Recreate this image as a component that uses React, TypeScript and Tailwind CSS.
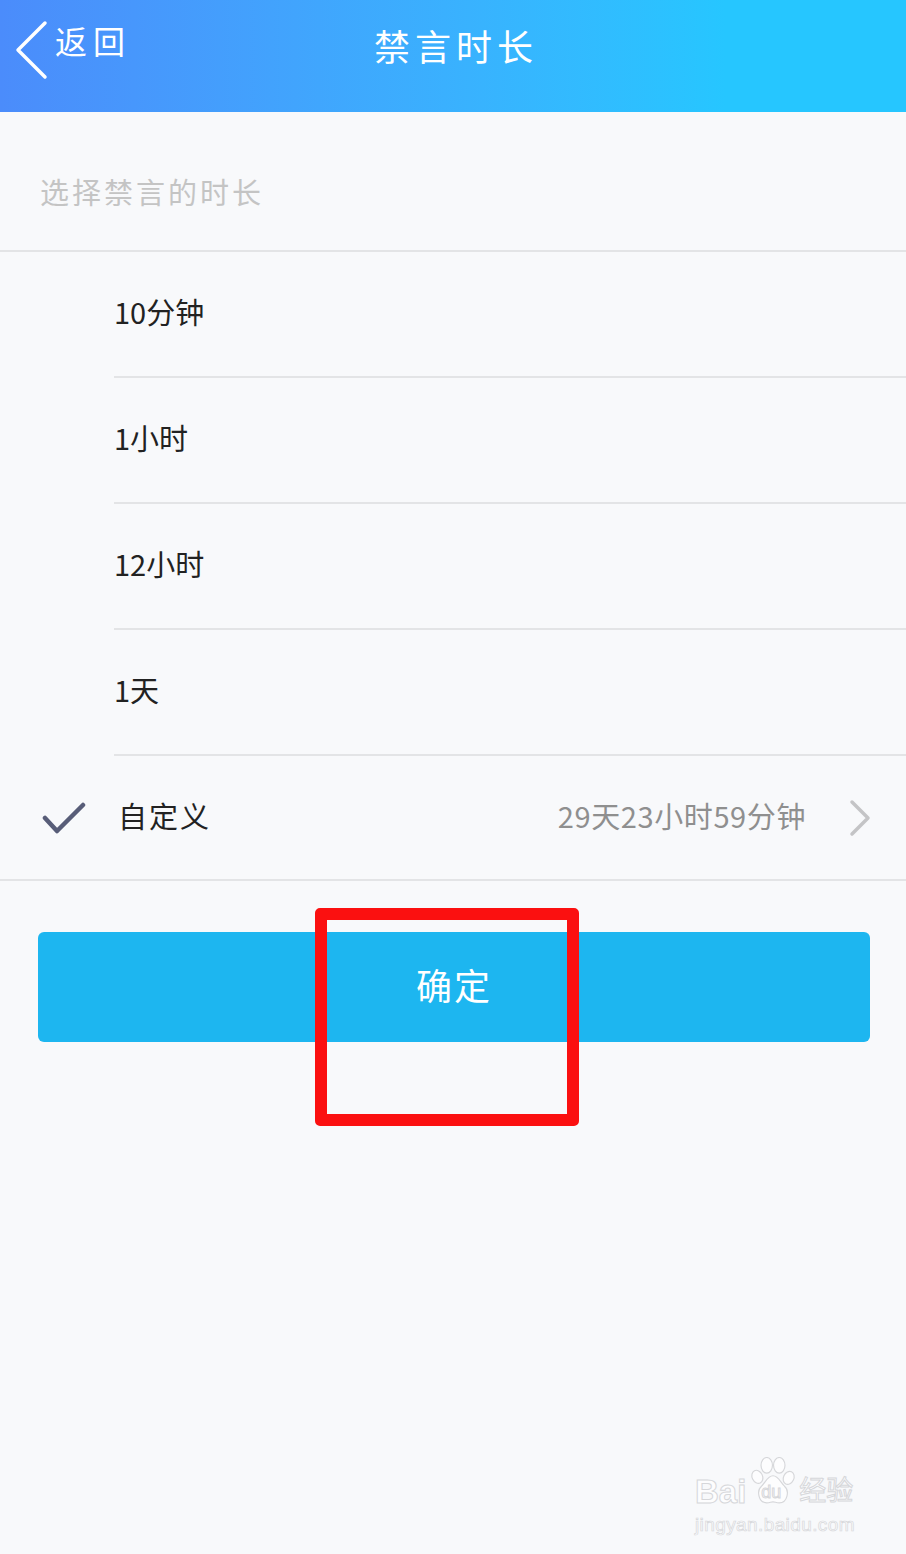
const cjk = "font-['Noto_Sans_CJK_SC','Noto_Sans',sans-serif]";

const rows = ["10分钟", "1小时", "12小时", "1天"];

function Paw() {
  return (
    <svg width="48" height="48" viewBox="0 0 46 46" fill="none" stroke="#d6d7da" strokeWidth="1.1" className="shrink-0">
      <ellipse cx="8" cy="19" rx="5" ry="6.5" transform="rotate(-25 8 19)" fill="#fdfdfe" />
      <ellipse cx="17" cy="8" rx="5.5" ry="7.5" fill="#fdfdfe" />
      <ellipse cx="29" cy="8" rx="5.5" ry="7.5" fill="#fdfdfe" />
      <ellipse cx="38" cy="20" rx="5" ry="6.5" transform="rotate(25 38 20)" fill="#fdfdfe" />
      <path d="M23 18c-5 0-7 6-11 10-5 4-3 16 5 16 3 0 4-1 6-1s3 1 6 1c8 0 10-12 5-16-4-4-6-10-11-10z" fill="#fdfdfe" />
    </svg>
  );
}

export default function App() {
  return (
    <div className={`relative h-[1554px] w-[906px] overflow-hidden bg-[#f8f9fb] ${cjk}`}>
      <header className="relative flex h-[112px] items-start justify-center bg-gradient-to-r from-[#4b8cfb] to-[#26c6ff] to-[80%] pl-[6px] pt-[18px] text-white">
        <div className="absolute left-[14px] top-[20px] flex items-start">
          <svg width="36" height="60" viewBox="0 0 36 60" fill="none" stroke="#ffffff" strokeWidth="3.5" strokeLinecap="round" strokeLinejoin="round">
            <path d="M31 3 4 30l27 27" />
          </svg>
          <span className="ml-[5px] -mt-[2px] text-[32px] leading-[44px] tracking-[6px]">返回</span>
        </div>
        <h1 className="text-[36px] font-normal leading-[54px] tracking-[5px]">禁言时长</h1>
      </header>

      <div className="flex h-[140px] items-center border-b-2 border-[#e3e4e6] pl-[40px] pt-[22px] text-[29px] tracking-[3px] text-[#c4c4c4]">
        选择禁言的时长
      </div>

      <ul>
        {rows.map((row) => (
          <li key={row} className="ml-[114px] flex h-[126px] items-center border-b-2 border-[#e3e4e6] pb-[4px] text-[29px] text-[#222222]">
            {row}
          </li>
        ))}
        <li className="flex h-[125px] items-center border-b-2 border-[#e3e4e6] pl-[42px] pr-[34px]">
          <svg width="44" height="32" viewBox="0 0 44 32" fill="none" stroke="#585d78" strokeWidth="4.5" strokeLinecap="round" strokeLinejoin="round" className="shrink-0">
            <path d="M3 16l12 13L41 3" />
          </svg>
          <span className="mb-[4px] ml-[32px] text-[29px] tracking-[2px] text-[#222222]">自定义</span>
          <span className="mb-[4px] ml-auto text-[29px] tracking-[0.6px] text-[#8f8f8f]">29天23小时59分钟</span>
          <svg width="24" height="38" viewBox="0 0 24 38" fill="none" stroke="#c4c4c6" strokeWidth="3.5" strokeLinecap="round" strokeLinejoin="round" className="ml-[42px] shrink-0">
            <path d="M4 3l16 16L4 35" />
          </svg>
        </li>
      </ul>

      <div className="pl-[38px] pt-[51px]">
        <button className="h-[110px] w-[832px] rounded-[6px] bg-[#1db6f0] pb-[7px] text-[36px] tracking-[2px] text-white">
          确定
        </button>
      </div>

      {/* annotation drawn over the screenshot */}
      <div className="absolute left-[315px] top-[908px] h-[218px] w-[264px] rounded-[5px] border-[12px] border-[#fb1010]" />

      {/* watermark */}
      <div className="absolute left-[695px] top-[1457px] w-[170px] text-[#fdfdfe] [-webkit-text-stroke:1px_#d6d7da]">
        <div className="flex h-[48px] items-end font-['Liberation_Sans',sans-serif]">
          <span className="-mb-[6px] text-[33px] font-bold leading-[38px]">Bai</span>
          <div className="relative ml-[3px]">
            <Paw />
            <span className="absolute bottom-[3px] left-[12px] text-[18px] leading-[20px]">du</span>
          </div>
          <span className={`-mb-[2px] ml-[2px] text-[27px] leading-[36px] ${cjk}`}>经验</span>
        </div>
        <div className="mt-[9px] font-['Liberation_Sans',sans-serif] text-[19px] leading-[22px] tracking-[0.4px] [-webkit-text-stroke:0.7px_#d6d7da]">
          jingyan.baidu.com
        </div>
      </div>
    </div>
  );
}
